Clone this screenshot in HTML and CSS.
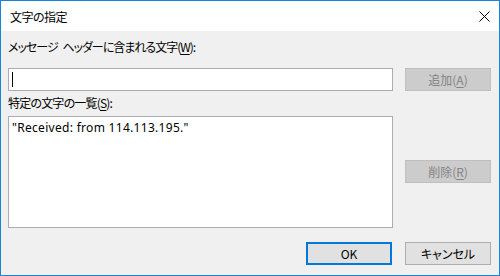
FILE: index.html
```html
<!DOCTYPE html>
<html lang="ja">
<head>
<meta charset="utf-8">
<title>文字の指定</title>
<link rel="stylesheet" href="styles.css">
</head>
<body>
<div class="window">
  <div class="titlebar">
    <span class="title">文字の指定</span>
    <span class="close">
      <svg width="11" height="11" viewBox="0 0 11 11"><path d="M0.5 0.5 L10.5 10.5 M10.5 0.5 L0.5 10.5" stroke="#000" stroke-width="1" fill="none"/></svg>
    </span>
  </div>
  <div class="content">
    <div class="label label-top">メッセージ ヘッダーに含まれる文字(<u>W</u>):</div>
    <div class="row row-input">
      <div class="textbox"><span class="caret"></span></div>
      <div class="btn disabled">追加(<u>A</u>)</div>
    </div>
    <div class="label label-list">特定の文字の一覧(<u>S</u>):</div>
    <div class="row row-list">
      <div class="listbox">
        <div class="item">"Received: from 114.113.195."</div>
      </div>
      <div class="side">
        <div class="btn disabled">削除(<u>R</u>)</div>
      </div>
    </div>
    <div class="row row-bottom">
      <div class="btn default">OK</div>
      <div class="btn">キャンセル</div>
    </div>
  </div>
</div>
</body>
</html>
```
FILE: styles.css
```css
* { box-sizing: border-box; }
html, body { margin: 0; padding: 0; }
body {
  width: 500px;
  height: 276px;
  overflow: hidden;
  font-family: "Noto Sans CJK JP", "Noto Sans", sans-serif;
  font-size: 12px;
  color: #000;
  font-feature-settings: "palt";
}
.window {
  width: 500px;
  height: 276px;
  border: 1px solid #1883d7;
  display: flex;
  flex-direction: column;
  background: #f0f0f0;
}
.titlebar {
  height: 30px;
  background: #fff;
  display: flex;
  align-items: center;
  justify-content: space-between;
  padding-left: 9px;
  padding-right: 9px;
  flex: none;
}
.title {
  font-size: 12px;
  line-height: 16px;
  padding-top: 1px;
  letter-spacing: -0.5px;
}
.close {
  width: 11px;
  height: 11px;
  display: flex;
  margin-top: 1px;
}
.content {
  flex: 1;
  padding: 0 7px 0 7px;
  display: flex;
  flex-direction: column;
}
.label {
  line-height: 16px;
  height: 16px;
  white-space: nowrap;
}
.label-top { margin-top: 8px; letter-spacing: -1px; word-spacing: 3px; }
.label-list { margin-top: 4px; letter-spacing: -0.8px; }
u { text-decoration: underline; text-underline-offset: 2px; }
.row {
  display: flex;
  gap: 12px;
}
.row-input { margin-top: 13px; height: 23px; }
.textbox {
  width: 385px;
  height: 23px;
  background: #fff;
  border: 1px solid #abadb3;
  position: relative;
  padding: 3px 0 0 3px;
}
.caret {
  display: block;
  width: 1px;
  height: 15px;
  background: #000;
}
.btn {
  width: 86px;
  height: 23px;
  border: 1px solid #adadad;
  background: #e1e1e1;
  display: flex;
  align-items: center;
  justify-content: center;
  line-height: 16px;
  white-space: nowrap;
}
.btn.disabled {
  background: #cccccc;
  border-color: #bfbfbf;
  color: #838383;
}
.btn.default {
  border: 2px solid #0078d7;
}
.row-list { margin-top: 5px; }
.listbox {
  width: 385px;
  height: 112px;
  background: #fff;
  border: 1px solid #abadb3;
  padding: 3px 3px;
}
.item {
  line-height: 16px;
  font-family: "Noto Sans", "Noto Sans CJK JP", sans-serif;
  font-size: 12px;
  letter-spacing: 0.3px;
}
.side {
  padding-top: 44px;
}
.row-bottom {
  margin-top: 14px;
  justify-content: flex-end;
  gap: 13px;
  padding-right: 1px;
}
```
